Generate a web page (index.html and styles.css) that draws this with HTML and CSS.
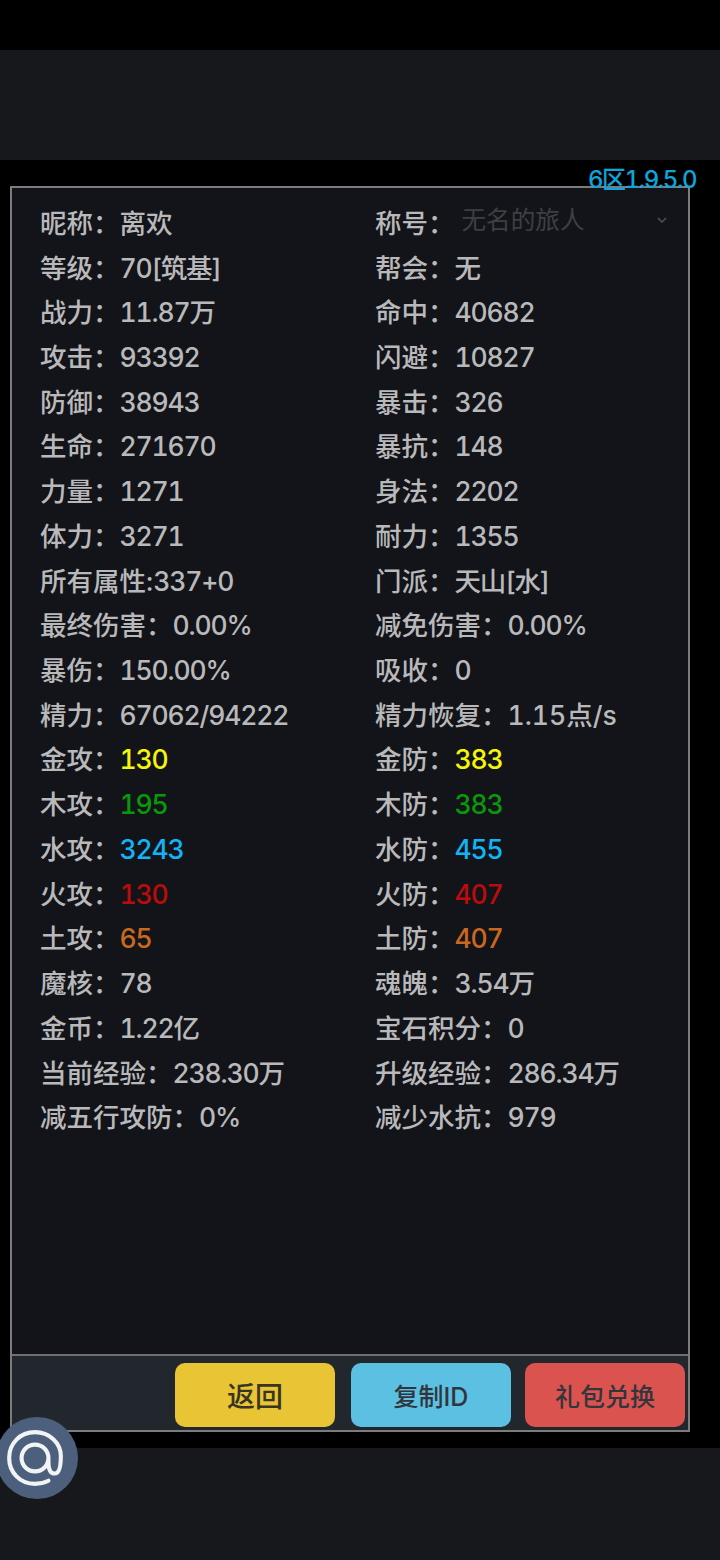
FILE: index.html
```html
<!DOCTYPE html>
<html lang="zh-CN">
<head>
<meta charset="utf-8">
<title>角色属性</title>
<link rel="stylesheet" href="styles.css">
</head>
<body>
<div class="screen">
  <div class="band-top"></div>
  <div class="header"></div>
  <main class="stage">
    <div class="version">6区1.9.5.0</div>
    <section class="panel">
      <div class="stats">
        <div class="row"><span>昵称：离欢</span><span class="title-cell">称号：<span class="select"><span>无名的旅人</span><svg class="chev" viewBox="0 0 10 6"><path d="M1 1l4 4 4-4"/></svg></span></span></div>
        <div class="row"><span>等级：<i>70[筑基]</i></span><span>帮会：无</span></div>
        <div class="row"><span>战力：<i>11.87万</i></span><span>命中：<i>40682</i></span></div>
        <div class="row"><span>攻击：<i>93392</i></span><span>闪避：<i>10827</i></span></div>
        <div class="row"><span>防御：<i>38943</i></span><span>暴击：<i>326</i></span></div>
        <div class="row"><span>生命：<i>271670</i></span><span>暴抗：<i>148</i></span></div>
        <div class="row"><span>力量：<i>1271</i></span><span>身法：<i>2202</i></span></div>
        <div class="row"><span>体力：<i>3271</i></span><span>耐力：<i>1355</i></span></div>
        <div class="row"><span>所有属性:<i>337+0</i></span><span>门派：<i>天山[水]</i></span></div>
        <div class="row"><span>最终伤害：<i>0.00%</i></span><span>减免伤害：<i>0.00%</i></span></div>
        <div class="row"><span>暴伤：<i>150.00%</i></span><span>吸收：<i>0</i></span></div>
        <div class="row"><span>精力：<i>67062/94222</i></span><span>精力恢复：1.15点/s</span></div>
        <div class="row"><span>金攻：<i class="gold">130</i></span><span>金防：<i class="gold">383</i></span></div>
        <div class="row"><span>木攻：<i class="wood">195</i></span><span>木防：<i class="wood">383</i></span></div>
        <div class="row"><span>水攻：<i class="water">3243</i></span><span>水防：<i class="water">455</i></span></div>
        <div class="row"><span>火攻：<i class="fire">130</i></span><span>火防：<i class="fire">407</i></span></div>
        <div class="row"><span>土攻：<i class="earth">65</i></span><span>土防：<i class="earth">407</i></span></div>
        <div class="row"><span>魔核：<i>78</i></span><span>魂魄：<i>3.54万</i></span></div>
        <div class="row"><span>金币：<i>1.22亿</i></span><span>宝石积分：<i>0</i></span></div>
        <div class="row"><span>当前经验：<i>238.30万</i></span><span>升级经验：<i>286.34万</i></span></div>
        <div class="row"><span>减五行攻防：<i>0%</i></span><span>减少水抗：<i>979</i></span></div>
      </div>
      <div class="footer">
        <button class="btn yellow big">返回</button>
        <button class="btn blue">复制ID</button>
        <button class="btn red">礼包兑换</button>
      </div>
    </section>
    <div class="at"><svg viewBox="0 0 60 60"><path d="M43 52C39 54 35 55 30 55C15.500 55 5 44 5 30C5 16 15.500 5 30 5C44 5 55 15.500 55 28C55 36 54 45 49 45C44 45 43 39 43 34V30M43 30A13 13 0 1 1 17 30A13 13 0 1 1 43 30Z"/></svg></div>
  </main>
  <div class="footer-band"></div>
</div>
</body>
</html>
```
FILE: styles.css
```css
* { box-sizing: border-box; }
html, body { margin: 0; padding: 0; background: #000; }
.screen {
  width: 720px;
  height: 1560px;
  display: flex;
  flex-direction: column;
  background: #000;
  font-family: "Inter", "Noto Sans CJK SC", sans-serif;
  font-variant-numeric: tabular-nums;
  color: #b9b9bb;
}
.band-top { height: 50px; background: #000; flex: none; }
.header { height: 110px; background: #17181c; flex: none; }
.stage { position: relative; height: 1288px; flex: none; padding: 26px 30px 16px 10px; }
.footer-band { flex: 1; background: #17181c; }
.version {
  position: absolute;
  right: 24px;
  top: 6px;
  font-size: 24px;
  font-weight: 500;
  line-height: 28px;
  color: #0ea5dc;
  z-index: 1;
  letter-spacing: -1.450px;
}
.panel {
  height: 1246px;
  display: flex;
  flex-direction: column;
  border: 2px solid #7c7c7c;
  background: #131419;
}
.stats { flex: 1; padding: 12.500px 0 0 28px; }
.row {
  display: grid;
  grid-template-columns: 335px 1fr;
  height: 44.720px;
  align-items: center;
  font-size: 26.500px;
  font-weight: 500;
  line-height: 44px;
  white-space: nowrap;
}
.row i { font-style: normal; letter-spacing: -1.150px; }
.gold { color: #f5f50a; }
.wood { color: #0a980a; }
.water { color: #12b4f5; }
.fire { color: #bb0c0c; }
.earth { color: #c8691f; }
.title-cell { display: flex; align-items: center; }
.select {
  flex: 1;
  display: flex;
  align-items: center;
  justify-content: space-between;
  color: #3e3f44;
  font-size: 24.600px;
  font-weight: 400;
  margin: -6px 21px 0 7px;
}
.chev { width: 10px; height: 6px; }
.chev path { fill: none; stroke: #54555a; stroke-width: 1.4; }
.footer {
  height: 76px;
  flex: none;
  border-top: 2px solid #6f7072;
  background: #22272e;
  display: flex;
  justify-content: flex-end;
  gap: 16px;
  padding: 7px 3px 0 0;
}
.btn {
  width: 160px;
  height: 64px;
  border: 0;
  border-radius: 10px;
  padding: 0;
  font-family: inherit;
  font-size: 25px;
  font-weight: 500;
  color: #32363c;
}
.btn.big { font-size: 28px; font-weight: 500; color: #3a3423; }
.yellow { background: #e9c535; }
.blue { background: #5bc0e2; margin-right: -2px; }
.red { background: #db534f; font-size: 25px; }
.at {
  position: absolute;
  left: -4px;
  top: 1257px;
  width: 82px;
  height: 82px;
  border-radius: 50%;
  background: #4c5f7d;
  display: flex;
  align-items: center;
  justify-content: center;
  padding-right: 5px;
}
.at svg { width: 62px; height: 62px; flex: none; }
.at path { fill: none; stroke: #f2f3f5; stroke-width: 4; stroke-linecap: round; }
```
